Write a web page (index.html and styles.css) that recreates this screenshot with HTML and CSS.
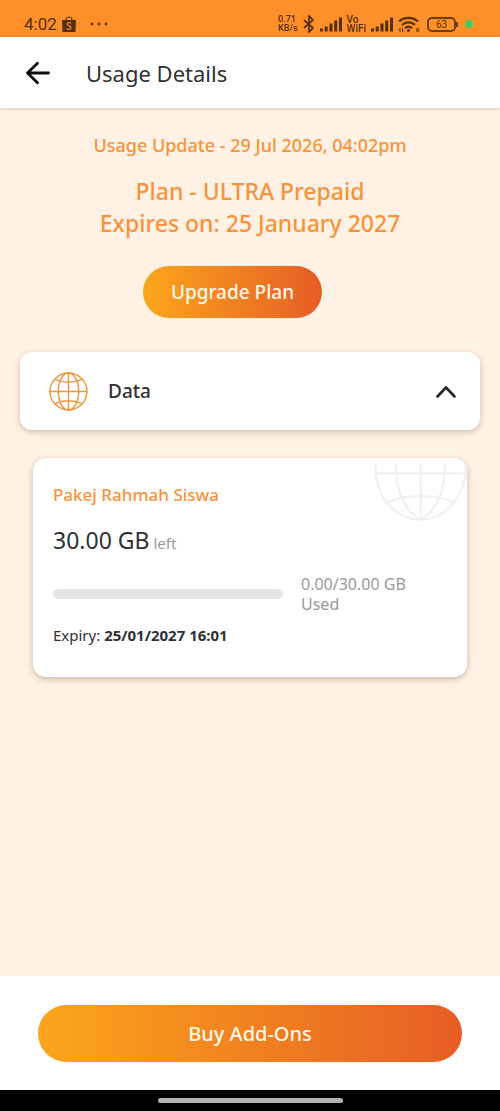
FILE: index.html
```html
<!DOCTYPE html>
<html lang="en">
<head>
<meta charset="utf-8">
<meta name="viewport" content="width=device-width, initial-scale=1">
<title>Usage Details</title>
<link rel="stylesheet" href="styles.css">
</head>
<body>
<div class="screen">
  <div class="status">
    <span class="clock">4:02</span>
    <svg class="bag" width="14" height="16" viewBox="0 0 14 16" aria-hidden="true">
      <path d="M4 5V4a3 3 0 0 1 6 0v1" fill="none" stroke="#6b3d0c" stroke-width="1.2"/>
      <path d="M0 4h14l-.5 12H.5z" fill="#54300c"/>
      <path d="M9 7.200C8 6.300 5.200 6.300 5.200 8.200c0 1.900 3.900 1.400 3.900 3.500 0 2-3 2-4.300.8" fill="none" stroke="#f08a2a" stroke-width="1.200"/>
    </svg>
    <svg class="dots" width="18" height="4" viewBox="0 0 18 4" fill="#5e350c" aria-hidden="true"><circle cx="2" cy="2" r="1.400"/><circle cx="9" cy="2" r="1.400"/><circle cx="16" cy="2" r="1.400"/></svg>
    <div class="indicators">
      <span class="tiny speed">0.71<br>KB/s</span>
      <svg width="12" height="18" viewBox="0 0 12 18" fill="none" stroke="#54300c" stroke-width="1.700" aria-hidden="true"><path d="M1 5l9 8-4 4V1l4 4-9 8"/></svg>
      <svg class="bars" width="22" height="16" viewBox="0 0 22 16" fill="#54300c" aria-hidden="true"><path d="M0 12.500h3v3H0zM4.700 10.500h3v5h-3zM9.500 7.500h3v8h-3zM14.200 4.500h3v11h-3zM19 1.500h3v14h-3z"/></svg>
      <span class="tiny">Vo<br>WiFi</span>
      <svg class="bars" width="22" height="16" viewBox="0 0 22 16" fill="#54300c" aria-hidden="true"><path d="M0 12.500h3v3H0zM4.700 10.500h3v5h-3zM9.500 7.500h3v8h-3zM14.200 4.500h3v11h-3zM19 1.500h3v14h-3z"/></svg>
      <svg class="wifi" width="22" height="18" viewBox="0 0 22 18" aria-hidden="true">
        <g fill="none" stroke="#54300c" stroke-width="2.300"><path d="M1 6.500a14 14 0 0 1 19 0"/><path d="M4 10a9.500 9.500 0 0 1 13 0"/><path d="M7 13.200a5 5 0 0 1 7 0"/></g>
        <circle cx="10.500" cy="15.600" r="1.500" fill="#54300c"/>
        <path d="M2 17v-3.500m-1.200 1L2 13.300M4.500 13v3.500m1.200-1L4.500 16.700" stroke="#54300c" fill="none"/>
        <path d="M20.500 12.800c-1.500.5-2 1.500-2 2.700" stroke="#54300c" fill="none"/><circle cx="19.800" cy="15.500" r="1.300" stroke="#54300c" fill="none"/>
      </svg>
      <span class="battery">63</span>
      <span class="live"></span>
    </div>
  </div>

  <header class="appbar">
    <button class="back" type="button" aria-label="Back">
      <svg width="24" height="24" viewBox="0 0 24 24" fill="none" stroke="#0c0c0c" stroke-width="2.800" stroke-linecap="round" stroke-linejoin="round"><path d="M22.500 12H2M11.500 2.200L1.500 12l10 9.800"/></svg>
    </button>
    <h1 class="title">Usage Details</h1>
  </header>

  <main class="content">
    <p class="updated">Usage Update - 29 Jul 2026, 04:02pm</p>
    <h2 class="plan">Plan - ULTRA Prepaid<br>Expires on: 25 January 2027</h2>
    <button class="pill upgrade" type="button">Upgrade Plan</button>

    <button class="section" type="button" aria-expanded="true">
      <svg width="39" height="39" viewBox="0 0 40 40" fill="none" stroke="#f0963f" stroke-width="1.500" aria-hidden="true">
        <circle cx="20" cy="20" r="19"/><ellipse cx="20" cy="20" rx="10.500" ry="19"/>
        <path d="M20 1v38M1 20h38M6 7.500q14 6 28 0M6 32.500q14-6 28 0"/>
      </svg>
      <span class="section-name">Data</span>
      <svg width="20" height="13" viewBox="0 0 20 13" fill="none" stroke="#262626" stroke-width="2.600" stroke-linecap="round" stroke-linejoin="round" aria-hidden="true"><path d="M1.500 11.500l8.500-9 8.500 9"/></svg>
    </button>

    <article class="card">
      <svg class="watermark" width="93" height="63" viewBox="0 -6 93 63" fill="none" stroke="#f0f0f1" stroke-width="2.200" aria-hidden="true">
        <path d="M1.500 0C0 31 20 55.500 46.500 55.500S93 31 91.500 0M22 0c-1 24 8 47 24.500 55.500C63 47 72 24 70.500 0M46.500 0v55.500M2 9.500h89M13 38q33-12 67 0"/>
      </svg>
      <h3 class="package">Pakej Rahmah Siswa</h3>
      <p class="remaining"><span>30.00 GB</span><span class="left">left</span></p>
      <div class="usage">
        <div class="track" role="progressbar" aria-label="Data used" aria-valuemin="0" aria-valuemax="30" aria-valuenow="0"></div>
        <p class="used">0.00/30.00 GB<br>Used</p>
      </div>
      <p class="expiry">Expiry: <b>25/01/2027 16:01</b></p>
    </article>
  </main>

  <footer class="footer">
    <button class="pill buy" type="button">Buy Add-Ons</button>
  </footer>
  <div class="navbar"><span class="handle"></span></div>
</div>
</body>
</html>
```
FILE: styles.css
```css
* { box-sizing: border-box; }
body, h1, h2, h3, p { margin: 0; }
body {
  font-family: "Noto Sans", "Open Sans", sans-serif;
  color: #303033;
  background: #fff2e4;
}
button {
  border: 0;
  padding: 0;
  font: inherit;
  color: inherit;
  background: none;
  cursor: pointer;
}
svg { display: block; flex: none; }
.screen { min-height: 100vh; display: flex; flex-direction: column; }

.status {
  display: flex;
  align-items: center;
  height: 37px;
  padding: 11px 27px 0 24px;
  background: #ff8f28;
  color: #54300c;
  font-family: Roboto, sans-serif;
}
.clock { font-size: 17px; line-height: 20px; font-weight: 400; }
.bag { margin-left: 5px; }
.dots { margin-left: 14px; }
.indicators { display: flex; align-items: center; gap: 5px; margin-left: auto; }
.tiny { font-size: 10px; line-height: 9px; font-weight: 500; }
.speed { font-size: 9px; }
.battery {
  position: relative;
  width: 29px;
  height: 15px;
  margin-left: 2px;
  border: 2px solid #6e3f10;
  border-radius: 5px;
  font-size: 10px;
  line-height: 11px;
  text-align: center;
}
.battery::after {
  content: "";
  position: absolute;
  right: -4px;
  top: 3px;
  width: 2px;
  height: 5px;
  background: #6e3f10;
}
.live { width: 8px; height: 8px; margin-left: 4px; border-radius: 50%; background: #35d266; }

.appbar {
  position: relative;
  display: flex;
  align-items: center;
  gap: 36px;
  height: 71px;
  padding: 0 26px;
  background: #fff;
  box-shadow: 0 1px 3px rgba(90, 60, 30, 0.25);
}
.title { font-size: 22px; line-height: 30px; font-weight: 400; }

.content {
  flex: 1;
  display: flex;
  flex-direction: column;
  padding: 25px 20px;
}
.updated {
  color: #f9923a;
  font-size: 18px;
  line-height: 24px;
  font-weight: 500;
  text-align: center;
}
.plan {
  margin-top: 18px;
  color: #f9923a;
  font-size: 23px;
  line-height: 32px;
  font-weight: 500;
  text-align: center;
}
.pill {
  border-radius: 29px;
  background: linear-gradient(90deg, #fba61b, #e65d25);
  color: #fff8e8;
  font-size: 20px;
  font-weight: 500;
}
.upgrade {
  align-self: center;
  height: 52px;
  margin: 27px 35px 0 0;
  padding: 0 28px;
  font-size: 19px;
}
.section {
  display: flex;
  align-items: center;
  gap: 20px;
  height: 78px;
  margin-top: 34px;
  padding: 0 24px 0 29px;
  border-radius: 12px;
  background: #fff;
  box-shadow: 0 2px 6px rgba(90, 50, 20, 0.28);
  text-align: left;
}
.section-name { flex: 1; font-size: 19px; font-weight: 500; }
.card {
  position: relative;
  margin: 28px 13px 0;
  padding: 24px 20px 32px;
  border-radius: 13px;
  background: #fff;
  box-shadow: 0 2px 6px rgba(90, 50, 20, 0.32);
}
.watermark { position: absolute; top: 0; right: 0; }
.package { color: #f9923a; font-size: 17px; line-height: 26px; font-weight: 500; }
.remaining {
  display: flex;
  align-items: baseline;
  gap: 4px;
  margin-top: 16px;
  font-size: 23px;
  line-height: 32px;
}
.left { color: #999; font-size: 15px; }
.usage { display: flex; align-items: center; gap: 18px; margin-top: 15px; }
.track { flex: 1; height: 10px; border-radius: 5px; background: #e5e5e5; }
.used { flex: 0 0 146px; color: #999; font-size: 16px; line-height: 20px; }
.expiry { margin-top: 11px; font-size: 15px; line-height: 20px; }

.footer { display: flex; padding: 29px 38px 28px; background: #fff; }
.buy { flex: 1; height: 57px; }
.navbar {
  display: flex;
  align-items: center;
  justify-content: center;
  height: 21px;
  background: #000;
}
.handle { width: 37%; height: 5px; border-radius: 3px; background: #b2b2b2; }
```
